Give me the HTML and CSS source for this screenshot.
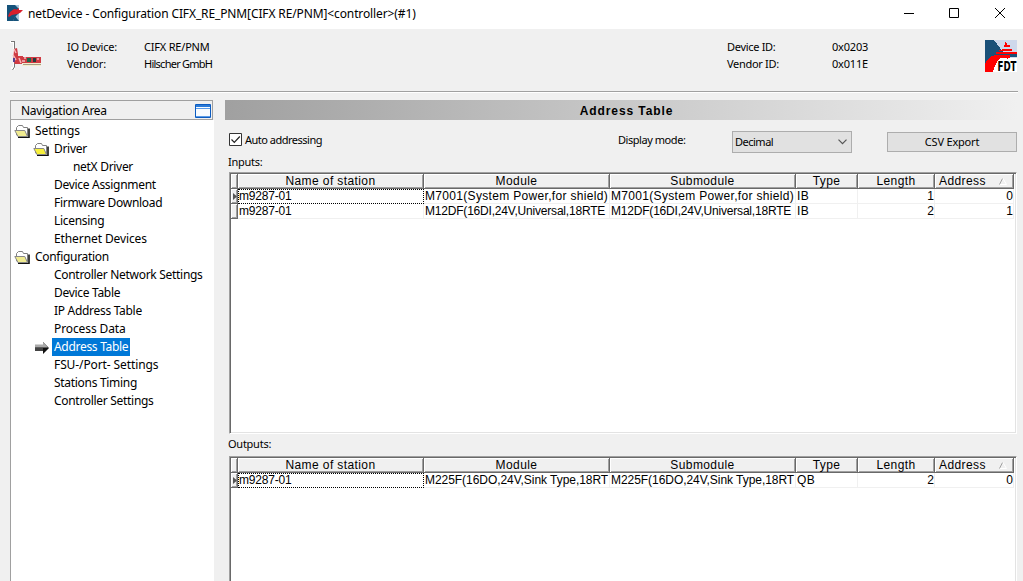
FILE: index.html
```html
<!DOCTYPE html>
<html lang="en">
<head>
<meta charset="utf-8">
<title>netDevice</title>
<link rel="stylesheet" href="styles.css">
</head>
<body>
<svg class="defs" width="0" height="0">
  <symbol id="folder" viewBox="0 0 16 13">
    <path d="M15 3.500V12.500H4" fill="none" stroke="#111" stroke-width="1.600"/>
    <path d="M2.500 10V2.500L4.500.5H8.500L9.500 2.500H13.500V11H4z" fill="#fff" stroke="#808080"/>
    <path class="flap" d="M.8 5.500H10.800L13.500 11.500H4z" stroke="#888"/>
  </symbol>
  <symbol id="sort" viewBox="0 0 8 7">
    <path d="M0.5 6.5L3.5 .5" stroke="#a0a0a0"/><path d="M4 .5l3.5 6H1" stroke="#fff" fill="none"/>
  </symbol>
</svg>
<div class="window">
  <header class="titlebar">
    <svg class="app-icon" width="16" height="16" viewBox="0 0 16 16"><path d="M0 0h12v16H0z" fill="#15527a"/><path d="M8 0h4v4zM12 8v8H6l2-4z" fill="#a9c7dc"/><path d="M6 16l2-5 4 5z" fill="#15527a"/><path d="M1 11L3 7l4-3 3 .5L12 3v2h4l-3 3-3 1-5 1-3 2z" fill="#d81f2c"/></svg>
    <h1 class="caption">netDevice - Configuration CIFX_RE_PNM[CIFX RE/PNM]&lt;controller&gt;(#1)</h1>
    <svg class="winbtns" width="102" height="12" viewBox="0 0 102 12" fill="none" stroke="#000"><path d="M0 6.500h10M45.500 1.500h9v9h-9z"/><path d="M91 1l10 10M101 1L91 11"/></svg>
  </header>
  <section class="device">
    <svg class="card-icon" width="32" height="32" viewBox="0 0 32 32">
      <path d="M0 2h4v27H2M4 28H1" fill="none" stroke="#fff" stroke-width="2"/><path d="M1 1.500h3M4.500 1v10M4.500 23v4l-2 3" stroke="#777" fill="none"/>
      <path d="M4 9l3-1 1 6v2h5v1h18v6H16l-4 1H5l-2-3z" fill="#cf3b43"/><path d="M4 9l2 4M3 15l3 5M9 18l2 5" stroke="#f3b6b8" stroke-width="1.500" fill="none"/>
      <path d="M3 18h2v4H3z" fill="#554090"/><path d="M17 18h4v4h-4z" fill="#176b4a"/><path d="M23 18h3v4h-3z" fill="#263c3c"/><path d="M14 18h2M27 19h2M12 21h3" stroke="#fff"/><path d="M12 23.500h19M12 25.500h19" stroke="#f4eccd"/><path d="M13 24.500h18" stroke="#a49c85"/>
    </svg>
    <dl class="facts facts-l"><dt>IO Device:</dt><dd>CIFX RE/PNM</dd><dt>Vendor:</dt><dd class="snug">Hilscher GmbH</dd></dl>
    <dl class="facts facts-r"><dt>Device ID:</dt><dd>0x0203</dd><dt>Vendor ID:</dt><dd>0x011E</dd></dl>
    <svg class="fdt" width="32" height="32" viewBox="0 0 32 32" shape-rendering="crispEdges">
      <path d="M0 0h32v32H0z" fill="#fff"/><path d="M8 0h24v18H8z" fill="#ced8eb"/><path d="M0 0h9l9 12v5l-5 15H0z" fill="#1a5078"/><path d="M15 13h17v4H18z" fill="#1a5078"/><path d="M14 18h18v14H8l1-7z" fill="#fff"/>
      <path d="M0 32V24q2-5 7-8l4-1h14v3H16q-6 4-8 14z" fill="#f00"/>
      <path d="M20 2h1v1h1v2h3v2h-6V5h1zM17 9h10v2H14v-1h3zM11 12h21v2H11zM21 16h4v1h-2v2h-1v-2h-1z" fill="#f00"/>
      <text x="12.500" y="31" textLength="19" lengthAdjust="spacingAndGlyphs" class="fdt-text">FDT</text>
    </svg>
  </section>
  <main class="body">
    <nav class="nav">
      <div class="nav-head"><span>Navigation Area</span><svg width="16" height="14" viewBox="0 0 16 14"><path d="M.5.5h15v13H.5z" fill="#f7fbff" stroke="#0b5bc0"/><path d="M1 1h14v2H1z" fill="#2a7ad8"/><path d="M1 4.500h14M1 12.500h14" stroke="#5a9be8"/></svg></div>
      <ul class="tree">
        <li class="l0"><svg class="folder"><use href="#folder"/></svg><span class="loose">Settings</span></li>
        <li class="l1"><svg class="folder bright"><use href="#folder"/></svg><span>Driver</span></li>
        <li class="l2"><span>netX Driver</span></li>
        <li class="l1"><span>Device Assignment</span></li>
        <li class="l1"><span>Firmware Download</span></li>
        <li class="l1"><span>Licensing</span></li>
        <li class="l1"><span class="loose">Ethernet Devices</span></li>
        <li class="l0"><svg class="folder"><use href="#folder"/></svg><span>Configuration</span></li>
        <li class="l1"><span>Controller Network Settings</span></li>
        <li class="l1"><span>Device Table</span></li>
        <li class="l1"><span>IP Address Table</span></li>
        <li class="l1"><span class="loose">Process Data</span></li>
        <li class="l1"><svg class="arrow" viewBox="0 0 15 12"><path d="M0 3h8V0l6 6-6 6V9H0z" fill="#111"/><path d="M0 2.500h8V0l5 5.500H0z" fill="#aaa"/><path d="M0 6h8v3H0z" fill="#444"/></svg><span class="sel">Address Table</span></li>
        <li class="l1"><span class="loose">FSU-/Port- Settings</span></li>
        <li class="l1"><span>Stations Timing</span></li>
        <li class="l1"><span>Controller Settings</span></li>
      </ul>
    </nav>
    <section class="content">
      <h2 class="banner">Address Table</h2>
      <div class="controls">
        <label class="auto"><svg width="13" height="13" viewBox="0 0 13 13" fill="none"><path d="M.5.5h12v12H.5z" fill="#fff" stroke="#333"/><path d="M2.500 6.500l2.800 2.800L10.800 3.500" stroke="#222" stroke-width="1.200"/></svg><span>Auto addressing</span></label>
        <span class="mode">Display mode:</span>
        <div class="select"><span>Decimal</span><svg width="9" height="6" viewBox="0 0 9 6"><path d="M.5.7l4 4 4-4" fill="none" stroke="#555" stroke-width="1.200"/></svg></div>
        <button class="csv">CSV Export</button>
      </div>
      <div class="lbl">Inputs:</div>
      <div class="grid">
        <div class="row head"><b></b><b>Name of station</b><b>Module</b><b>Submodule</b><b>Type</b><b>Length</b><b class="addr">Address<svg width="8" height="7"><use href="#sort"/></svg></b></div>
        <div class="row"><b><svg class="cur" width="4" height="7" viewBox="0 0 4 7"><path d="M0 0l4 3.500L0 7z"/></svg></b><i class="station focus">m9287-01</i><i class="power">M7001(System Power,for shield)</i><i class="power">M7001(System Power,for shield)</i><i>IB</i><i class="num">1</i><i class="num">0</i></div>
        <div class="row"><b></b><i class="station">m9287-01</i><i class="mod">M12DF(16DI,24V,Universal,18RTE</i><i class="mod">M12DF(16DI,24V,Universal,18RTE</i><i>IB</i><i class="num">2</i><i class="num">1</i></div>
      </div>
      <div class="lbl out">Outputs:</div>
      <div class="grid">
        <div class="row head"><b></b><b>Name of station</b><b>Module</b><b>Submodule</b><b>Type</b><b>Length</b><b class="addr">Address<svg width="8" height="7"><use href="#sort"/></svg></b></div>
        <div class="row"><b><svg class="cur" width="4" height="7" viewBox="0 0 4 7"><path d="M0 0l4 3.500L0 7z"/></svg></b><i class="station focus">m9287-01</i><i class="sink">M225F(16DO,24V,Sink Type,18RT</i><i class="sink">M225F(16DO,24V,Sink Type,18RT</i><i>QB</i><i class="num">2</i><i class="num">0</i></div>
      </div>
    </section>
  </main>
</div>
</body>
</html>
```
FILE: styles.css
```css
* { box-sizing: border-box; }
body { margin: 0; color: #000; font: 11px/17px "Noto Sans", sans-serif; overflow: hidden; }
.defs { display: block; height: 0; }
.window { width: 1023px; height: 581px; background: #f0f0f0; overflow: hidden; display: flex; flex-direction: column; }
.titlebar { flex: none; height: 29px; background: #fff; display: flex; align-items: center; padding: 0 17px 3px 7px; }
.app-icon { margin-right: 5px; }
.caption { margin: 0; flex: 1; font: 12px/20px "Noto Sans", sans-serif; letter-spacing: -.12px; white-space: nowrap; padding-top: 1px; }
.device { flex: none; height: 64px; margin: 0 5px 0 10px; border-bottom: 1px solid #fff; box-shadow: inset 0 -1px #a0a0a0; display: flex; align-items: flex-start; padding-top: 9px; }
.card-icon { margin-top: 2px; }
.facts { margin: 0; display: grid; grid-auto-rows: 17px; letter-spacing: -.2px; }
.facts dd { margin: 0; }
.facts .snug { letter-spacing: -.75px; }
.facts-l { grid-template-columns: 77px 583px; margin-left: 25px; }
.facts-r { grid-template-columns: 105px 153px; }
.facts-r dt { letter-spacing: -.3px; }
.fdt { flex: none; margin-top: 2px; }
.fdt-text { font: bold 14px "DejaVu Sans Condensed", sans-serif; }
.body { flex: 1; min-height: 0; display: flex; padding: 7px 6px 0 10px; gap: 11px; }
.nav { width: 204px; flex: none; display: flex; flex-direction: column; font-size: 12px; letter-spacing: -.3px; }
.nav-head { flex: none; width: 203px; height: 20px; border: 1px solid #a0a0a0; display: flex; align-items: center; justify-content: space-between; padding: 1px 1px 0 10px; }
.tree { flex: 1; margin: 0; padding: 2px 0 0 3px; list-style: none; background: #fff; border-left: 1px solid #a0a0a0; line-height: 18px; }
.tree li { display: flex; height: 18px; align-items: center; padding-left: 19px; white-space: nowrap; }
.tree span { padding: 0 2px; }
.tree .loose { letter-spacing: -.1px; }
.tree .l1 { padding-left: 38px; }
.tree .l2 { padding-left: 57px; }
.tree svg { flex: none; width: 16px; height: 13px; margin: 0 3px 0 -19px; }
.tree .arrow { width: 15px; height: 12px; margin: 1px 2px 0 -17px; }
.folder { fill: #f0eb90; }
.bright { fill: #f7f03c; }
.tree .sel { background: #0078d7; color: #fff; }
.content { flex: 1; display: flex; flex-direction: column; }
.banner { flex: none; margin: 0; height: 20px; background: linear-gradient(90deg, #a0a0a0, #f0f0f0); text-align: center; padding-left: 10px; font: bold 12px/22px "Liberation Sans", sans-serif; letter-spacing: .9px; }
.controls { flex: none; height: 34px; padding: 11px 1px 0 4px; display: flex; align-items: flex-start; }
.auto { width: 389px; height: 16px; display: flex; align-items: center; gap: 3px; letter-spacing: -.5px; }
.mode { width: 114px; letter-spacing: -.45px; }
.select { width: 120px; height: 22px; border: 1px solid #adadad; background: #e1e1e1; display: flex; align-items: center; justify-content: space-between; padding: 0 4px 0 2px; letter-spacing: -.5px; line-height: 16px; }
.select span { padding-bottom: 1px; }
.csv { width: 130px; height: 20px; margin: 1px 0 0 35px; padding: 0 0 1px; border: 1px solid #adadad; background: #e1e1e1; font: 11px/16px "Noto Sans", sans-serif; letter-spacing: -.2px; color: #000; }
.lbl { flex: none; height: 18px; padding-left: 3px; line-height: 16px; letter-spacing: -.25px; }
.out { height: 22px; line-height: 20px; }
.grid { flex: none; width: 788px; height: 262px; margin-left: 4px; background: #fff; padding: 1px; border: 1px solid; border-color: #a0a0a0 #fff #fff #a0a0a0; box-shadow: inset 1px 1px #696969, inset -1px -1px #e3e3e3; font: 12px/14px "Liberation Sans", sans-serif; letter-spacing: .4px; }
.row { display: grid; grid-template-columns: 7px 186px 186px 186px 62px 77px 79px; width: 783px; height: 15px; }
.row > * { overflow: hidden; white-space: nowrap; font-style: normal; font-weight: normal; }
.row b { background: #f0f0f0; text-align: center; border-right: 1px solid #696969; border-bottom: 1px solid #696969; box-shadow: inset 1px 1px #fff, inset -1px -1px #a0a0a0; }
.row i { border-right: 1px solid #f0f0f0; border-bottom: 1px solid #f0f0f0; padding-left: 1px; }
.row i.station { letter-spacing: -.2px; }
.row i.power { letter-spacing: .32px; }
.row i.mod { letter-spacing: -.2px; }
.row i.sink { letter-spacing: -.05px; }
.row i.num { text-align: right; padding: 0; letter-spacing: 0; }
.row i.focus { border: 1px dotted #000; line-height: 12px; padding-left: 0; }
.row b.addr { display: flex; align-items: center; justify-content: space-between; padding: 0 6px 0 4px; }
.cur { display: block; margin: 4px 0 0 2px; fill: #555; }
```
